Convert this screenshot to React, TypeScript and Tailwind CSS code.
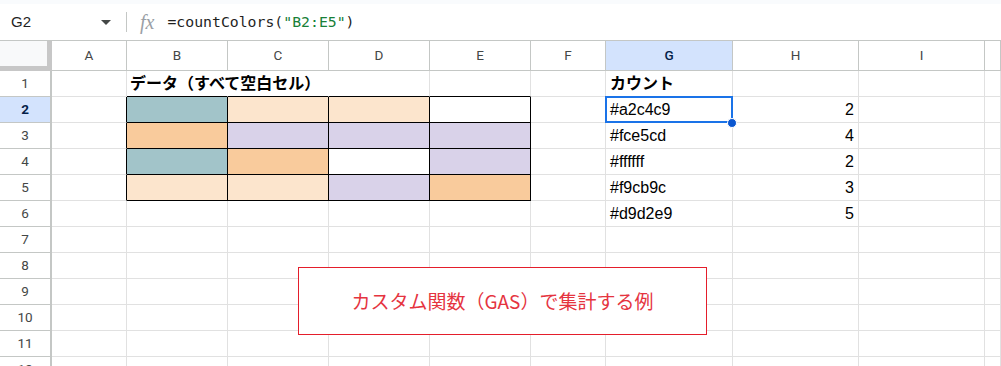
import React from "react"

type Col = { key: string, w: string }

const cols: Col[] = [
  { key: "A", w: "w-[75px]" },
  { key: "B", w: "w-[101px]" },
  { key: "C", w: "w-[101px]" },
  { key: "D", w: "w-[101px]" },
  { key: "E", w: "w-[101px]" },
  { key: "F", w: "w-[75px]" },
  { key: "G", w: "w-[127px]" },
  { key: "H", w: "w-[126px]" },
  { key: "I", w: "w-[126px]" },
  { key: "", w: "flex-1" },
]

// fill colours for B2:E5
const fills: string[][] = [
  ["bg-[#a2c4c9]", "bg-[#fce5cd]", "bg-[#fce5cd]", "bg-white"],
  ["bg-[#f9cb9c]", "bg-[#d9d2e9]", "bg-[#d9d2e9]", "bg-[#d9d2e9]"],
  ["bg-[#a2c4c9]", "bg-[#f9cb9c]", "bg-white", "bg-[#d9d2e9]"],
  ["bg-[#fce5cd]", "bg-[#fce5cd]", "bg-[#d9d2e9]", "bg-[#f9cb9c]"],
]

const counts: [string, number][] = [
  ["#a2c4c9", 2],
  ["#fce5cd", 4],
  ["#ffffff", 2],
  ["#f9cb9c", 3],
  ["#d9d2e9", 5],
]

const cellText = "font-['Liberation_Sans','Noto_Sans_CJK_JP',sans-serif] text-[16px] text-black whitespace-nowrap"

function Cell({ row, ci }: { row: number, ci: number }) {
  const col = cols[ci]
  let bg = "bg-transparent"
  let right = "border-r-[#e1e1e1]"
  let bottom = "border-b-[#e1e1e1]"
  let content: React.ReactNode = null
  let align = "justify-start pl-[4px]"

  const inData = row >= 2 && row <= 5 && ci >= 1 && ci <= 4
  if (inData) {
    bg = fills[row - 2][ci - 1]
    right = "border-r-black"
    bottom = "border-b-black"
  }
  if (row === 1 && ci >= 1 && ci <= 4) bottom = "border-b-black"
  // title overflows B1 into D1, sheets hides the gridlines under it
  if (row === 1 && (ci === 1 || ci === 2)) right = "border-r-transparent"
  if (row >= 2 && row <= 5 && ci === 0) right = "border-r-black"

  if (row === 1 && ci === 1) {
    content = <span className="font-bold">データ（すべて空白セル）</span>
    align = "justify-start pl-[3px] relative z-10"
  }
  if (row === 1 && ci === 6) content = <span className="font-bold">カウント</span>
  if (row >= 2 && row <= 6 && ci === 6) content = counts[row - 2][0]
  if (row >= 2 && row <= 6 && ci === 7) {
    content = counts[row - 2][1]
    align = "justify-end pr-[4px]"
  }

  return (
    <div className={`${col.w} h-full shrink-0 flex items-center border-r border-b ${right} ${bottom} ${bg} ${align} ${cellText}`}>
      {content}
    </div>
  )
}

export default function App() {
  const rows = Array.from({ length: 12 }, (_, i) => i + 1)

  return (
    <div className="relative w-[1001px] h-[366px] overflow-hidden bg-white">
      <div className="h-[4px] bg-[#f9fbfd]" />

      {/* formula bar */}
      <div className="h-[37px] flex items-center border-b border-[#c4c7c5] bg-white">
        <div className="w-[126px] h-full flex items-center justify-between pl-[11px] pr-[15px]">
          <span className="font-['Liberation_Sans',sans-serif] text-[15px] text-[#1f1f1f]">G2</span>
          <svg width="10" height="5" viewBox="0 0 10 5">
            <path d="M0 0 L10 0 L5 5 Z" fill="#444746" />
          </svg>
        </div>
        <div className="w-px h-[20px] bg-[#c4c7c5]" />
        <span className="ml-[13px] font-['Liberation_Serif',serif] italic text-[20px] text-[#9aa0a6] leading-none">fx</span>
        <span className="ml-[13px] font-['DejaVu_Sans_Mono',monospace] text-[14.8px] text-[#1f1f1f] whitespace-nowrap">
          =countColors(<span className="text-[#188038]">"B2:E5"</span>)
        </span>
      </div>

      {/* column headers */}
      <div className="h-[30px] flex">
        <div className="w-[52px] h-full shrink-0 bg-[#f8f9fa] border-r-[5px] border-b-[5px] border-[#c7c7c7]" />
        {cols.map((c) => (
          <div
            key={c.key || "rest"}
            className={`${c.w} h-full shrink-0 flex items-center justify-center border-r border-b border-[#c4c7c5] font-['Roboto',sans-serif] text-[13.5px] ${c.key === "G" ? "bg-[#d3e3fd] text-[#041e49] font-medium" : "bg-white text-[#444746]"}`}
          >
            {c.key}
          </div>
        ))}
      </div>

      {/* grid */}
      {rows.map((r) => (
        <div key={r} className="h-[26px] flex">
          <div
            className={`w-[52px] h-full shrink-0 flex items-center justify-center border-r-2 border-b border-r-[#c4c7c5] border-b-[#c4c7c5] font-['Roboto',sans-serif] text-[13.5px] ${r === 2 ? "bg-[#d3e3fd] text-[#041e49] font-bold" : "bg-white text-[#444746]"}`}
          >
            {r}
          </div>
          {cols.map((c, ci) => (
            <Cell key={c.key || "rest"} row={r} ci={ci} />
          ))}
        </div>
      ))}

      {/* selection on G2 */}
      <div className="absolute left-[605px] top-[96px] w-[128px] h-[27px] border-2 border-[#1a73e8]" />
      <div className="absolute left-[727px] top-[118px] w-[10px] h-[10px] rounded-full bg-[#0b57d0] border border-white" />

      {/* callout */}
      <div className="absolute left-[298px] top-[267px] w-[409px] h-[68px] border border-[#e41e2b] bg-white flex items-center justify-center">
        <span className="font-['Noto_Sans_CJK_JP',sans-serif] text-[19px] text-[#e5343f]">カスタム関数（GAS）で集計する例</span>
      </div>
    </div>
  )
}
